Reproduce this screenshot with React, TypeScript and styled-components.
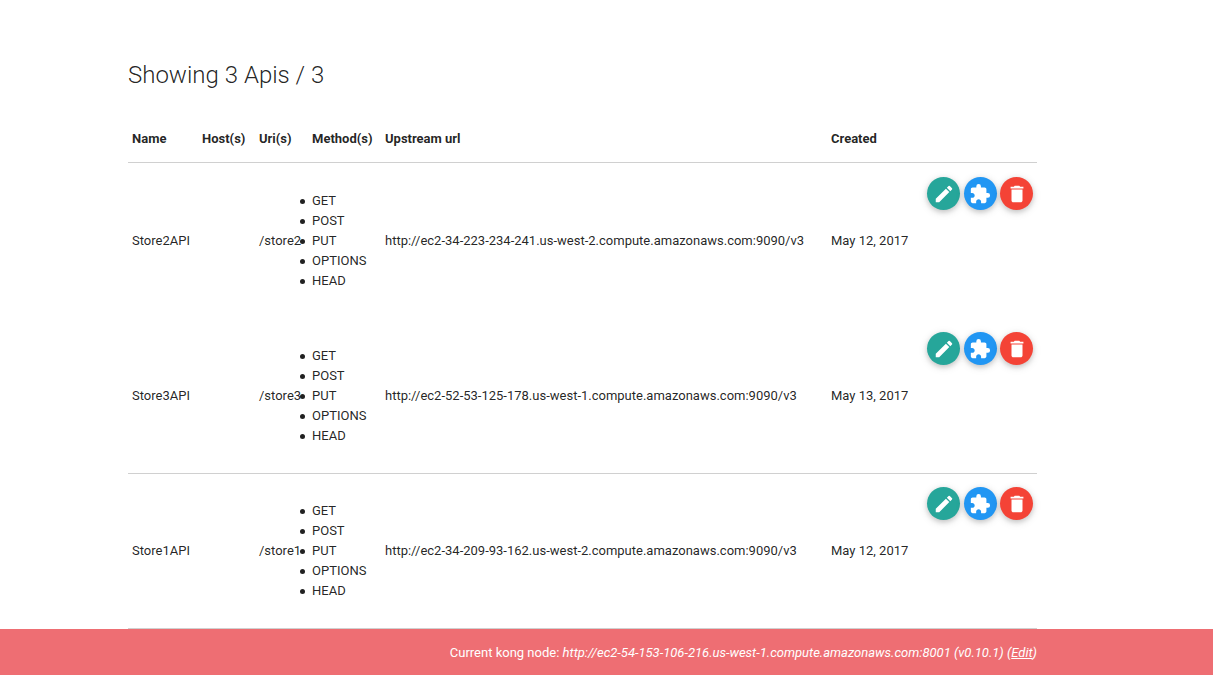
import React from "react";
import styled, { createGlobalStyle } from "styled-components";
import { MdDelete, MdExtension, MdModeEdit } from "react-icons/md";

const GlobalStyle = createGlobalStyle`
  *, *::before, *::after { box-sizing: border-box; }
  body {
    margin: 0;
    background: #fff;
    color: rgba(0, 0, 0, 0.87);
    font-family: Roboto, sans-serif;
    font-size: 13px;
    line-height: 20px;
  }
`;

const Page = styled.div`
  display: flex;
  flex-direction: column;
  min-height: 100vh;
`;

const Main = styled.main`
  flex: 1;
  padding: 60px 176px 0 128px;
`;

const Title = styled.h1`
  margin: 0 0 24px;
  font-size: 24px;
  font-weight: 300;
  line-height: 30px;
`;

const Table = styled.table`
  width: 100%;
  table-layout: fixed;
  border-collapse: separate;
  border-spacing: 0;
  border-bottom: 1px solid #d0d0d0;
`;

const Column = styled.col<{ $width?: number }>`
  width: ${({ $width }) => ($width ? `${$width}px` : "auto")};
`;

const HeadCell = styled.th`
  padding: 15px 4px 13px;
  border-bottom: 1px solid #d0d0d0;
  text-align: left;
  font-weight: 700;
  white-space: nowrap;
`;

const Row = styled.tr<{ $divided: boolean }>`
  > td {
    box-shadow: ${({ $divided }) => ($divided ? "inset 0 1px #d0d0d0" : "none")};
  }
`;

const Cell = styled.td`
  padding: 14px 4px;
  vertical-align: middle;
  white-space: nowrap;
`;

const MethodList = styled.ul`
  margin: 14px 0 13px -12px;
  padding: 0;
  list-style: none;
`;

const Method = styled.li`
  display: flex;
  align-items: center;
  gap: 7px;

  &::before {
    content: "";
    width: 5px;
    height: 5px;
    border-radius: 50%;
    background: currentColor;
  }
`;

const ActionCell = styled(Cell)`
  vertical-align: top;
`;

const Actions = styled.div`
  display: flex;
  justify-content: space-between;
`;

const ActionButton = styled.button<{ $color: string }>`
  display: flex;
  align-items: center;
  justify-content: center;
  width: 33px;
  height: 33px;
  padding: 0;
  border: 0;
  border-radius: 50%;
  background: ${({ $color }) => $color};
  color: #fff;
  font-size: 22px;
  cursor: pointer;
  box-shadow: 0 2px 5px rgba(0, 0, 0, 0.16), 0 2px 10px rgba(0, 0, 0, 0.12);
`;

const Footer = styled.footer`
  padding: 14px 176px 12px 128px;
  background: #ee6e73;
  color: #fff;
  text-align: right;
`;

const EditLink = styled.a`
  color: inherit;
  text-decoration: underline;
`;

const methods = ["GET", "POST", "PUT", "OPTIONS", "HEAD"];

const apis = [
  {
    name: "Store2API",
    uri: "/store2",
    upstream: "http://ec2-34-223-234-241.us-west-2.compute.amazonaws.com:9090/v3",
    created: "May 12, 2017",
    divided: false,
  },
  {
    name: "Store3API",
    uri: "/store3",
    upstream: "http://ec2-52-53-125-178.us-west-1.compute.amazonaws.com:9090/v3",
    created: "May 13, 2017",
    divided: false,
  },
  {
    name: "Store1API",
    uri: "/store1",
    upstream: "http://ec2-34-209-93-162.us-west-2.compute.amazonaws.com:9090/v3",
    created: "May 12, 2017",
    divided: true,
  },
];

export default function App() {
  return (
    <Page>
      <GlobalStyle />
      <Main>
        <Title>Showing 3 Apis / 3</Title>
        <Table>
          <colgroup>
            <Column $width={70} />
            <Column $width={57} />
            <Column $width={53} />
            <Column $width={73} />
            <Column />
            <Column $width={96} />
            <Column $width={114} />
          </colgroup>
          <thead>
            <tr>
              <HeadCell>Name</HeadCell>
              <HeadCell>Host(s)</HeadCell>
              <HeadCell>Uri(s)</HeadCell>
              <HeadCell>Method(s)</HeadCell>
              <HeadCell>Upstream url</HeadCell>
              <HeadCell>Created</HeadCell>
              <HeadCell aria-label="Actions" />
            </tr>
          </thead>
          <tbody>
            {apis.map((api) => (
              <Row key={api.name} $divided={api.divided}>
                <Cell>{api.name}</Cell>
                <Cell />
                <Cell>{api.uri}</Cell>
                <Cell>
                  <MethodList>
                    {methods.map((method) => (
                      <Method key={method}>{method}</Method>
                    ))}
                  </MethodList>
                </Cell>
                <Cell>{api.upstream}</Cell>
                <Cell>{api.created}</Cell>
                <ActionCell>
                  <Actions>
                    <ActionButton type="button" $color="#26a69a" aria-label={`Edit ${api.name}`}>
                      <MdModeEdit />
                    </ActionButton>
                    <ActionButton type="button" $color="#2196f3" aria-label={`Plugins of ${api.name}`}>
                      <MdExtension />
                    </ActionButton>
                    <ActionButton type="button" $color="#f44336" aria-label={`Delete ${api.name}`}>
                      <MdDelete />
                    </ActionButton>
                  </Actions>
                </ActionCell>
              </Row>
            ))}
          </tbody>
        </Table>
      </Main>
      <Footer>
        Current kong node:{" "}
        <em>
          http://ec2-54-153-106-216.us-west-1.compute.amazonaws.com:8001 (v0.10.1) (
          <EditLink href="#edit">Edit</EditLink>)
        </em>
      </Footer>
    </Page>
  );
}
